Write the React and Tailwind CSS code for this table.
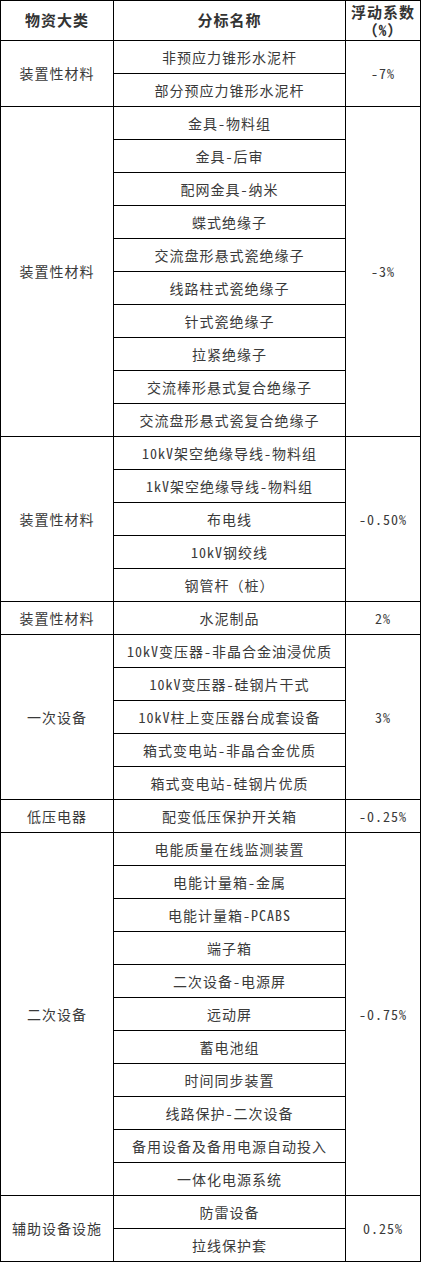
import React from "react";

const groups = [
  { cat: "装置性材料", coef: "-7%", items: ["非预应力锥形水泥杆", "部分预应力锥形水泥杆"], span: "row-span-2" },
  {
    cat: "装置性材料",
    coef: "-3%",
    span: "row-span-10",
    items: [
      "金具-物料组",
      "金具-后审",
      "配网金具-纳米",
      "蝶式绝缘子",
      "交流盘形悬式瓷绝缘子",
      "线路柱式瓷绝缘子",
      "针式瓷绝缘子",
      "拉紧绝缘子",
      "交流棒形悬式复合绝缘子",
      "交流盘形悬式瓷复合绝缘子",
    ],
  },
  {
    cat: "装置性材料",
    coef: "-0.50%",
    span: "row-span-5",
    items: ["10kV架空绝缘导线-物料组", "1kV架空绝缘导线-物料组", "布电线", "10kV钢绞线", "钢管杆（桩）"],
  },
  { cat: "装置性材料", coef: "2%", span: "row-span-1", items: ["水泥制品"] },
  {
    cat: "一次设备",
    coef: "3%",
    span: "row-span-5",
    items: [
      "10kV变压器-非晶合金油浸优质",
      "10kV变压器-硅钢片干式",
      "10kV柱上变压器台成套设备",
      "箱式变电站-非晶合金优质",
      "箱式变电站-硅钢片优质",
    ],
  },
  { cat: "低压电器", coef: "-0.25%", span: "row-span-1", items: ["配变低压保护开关箱"] },
  {
    cat: "二次设备",
    coef: "-0.75%",
    span: "row-span-11",
    items: [
      "电能质量在线监测装置",
      "电能计量箱-金属",
      "电能计量箱-PCABS",
      "端子箱",
      "二次设备-电源屏",
      "远动屏",
      "蓄电池组",
      "时间同步装置",
      "线路保护-二次设备",
      "备用设备及备用电源自动投入",
      "一体化电源系统",
    ],
  },
  { cat: "辅助设备设施", coef: "0.25%", span: "row-span-2", items: ["防雷设备", "拉线保护套"] },
];

const cell = "flex items-center justify-center text-center border-r border-b border-black";

export default function App() {
  return (
    <div className="w-[421px] bg-white font-['Noto_Sans_Mono_CJK_SC','Noto_Sans_CJK_SC',sans-serif]">
      <div className="grid grid-cols-[113px_232px_75px] grid-rows-[40px_repeat(37,33px)] border-t border-l border-black text-[14px] tracking-[1px] text-[#3a3a3a]">
        <div className={`${cell} col-start-1 text-[15px] font-bold text-[#333]`}>物资大类</div>
        <div className={`${cell} col-start-2 text-[15px] font-bold text-[#333]`}>分标名称</div>
        <div className={`${cell} col-start-3 flex-col text-[15px] font-bold leading-[18px] text-[#333]`}>
          <span className="block">浮动系数</span>
          <span className="block">（%）</span>
        </div>
        {groups.map((g, gi) => (
          <React.Fragment key={gi}>
            <div className={`${cell} col-start-1 ${g.span}`}>{g.cat}</div>
            <div className={`${cell} col-start-2`}>{g.items[0]}</div>
            <div className={`${cell} col-start-3 ${g.span}`}>{g.coef}</div>
            {g.items.slice(1).map((it, ii) => (
              <div key={ii} className={`${cell} col-start-2`}>
                {it}
              </div>
            ))}
          </React.Fragment>
        ))}
      </div>
    </div>
  );
}
